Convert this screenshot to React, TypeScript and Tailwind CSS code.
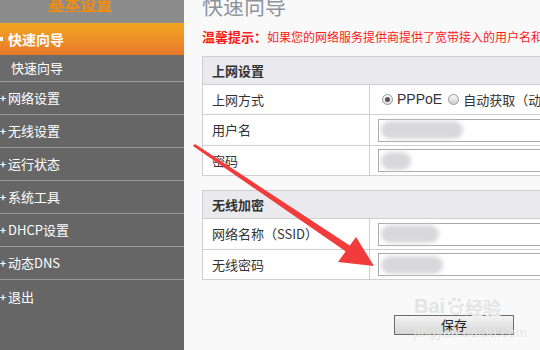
const FONT = '"Noto Sans CJK SC", "Liberation Sans", sans-serif';

const MENU = ['网络设置', '无线设置', '运行状态', '系统工具', 'DHCP设置', '动态DNS', '退出'];

function Blur({ w }: { w: number }) {
  return (
    <div className="flex items-center h-full pl-[2px]">
      <div
        className="h-[18px] rounded-full bg-[#d8d8da] blur-[2px]"
        style={{ width: w }}
      />
    </div>
  );
}

function Row({ label, children, last }: { label: string; children: React.ReactNode; last?: boolean }) {
  return (
    <div className={`grid grid-cols-[167px_1fr] ${last ? '' : 'border-b border-[#cfcfcf]'}`}>
      <div className="border-r border-[#cfcfcf] pl-[9px] flex items-center text-[13px] text-[#333]">{label}</div>
      <div className="flex items-center pl-[8px]">{children}</div>
    </div>
  );
}

function Field({ w }: { w: number }) {
  return (
    <div className="w-[200px] h-[23px] border border-[#a9a9a9] bg-white">
      <Blur w={w} />
    </div>
  );
}

export default function App() {
  return (
    <div className="relative w-[540px] h-[350px] flex overflow-hidden" style={{ fontFamily: FONT }}>
      {/* sidebar */}
      <div className="w-[184px] shrink-0 bg-[#666666] flex flex-col text-white">
        <div className="h-[23px] bg-[#8c8c8c] overflow-hidden pl-[48px]">
          <div className="mt-[-7px] text-[16px] leading-[20px] font-bold text-[#f08c10] underline">基本设置</div>
        </div>
        <div className="h-[32px] bg-gradient-to-b from-[#f2a620] to-[#e8782a] flex items-center">
          <span className="w-[3px] h-[4px] bg-white mr-[5px]" />
          <span className="text-[14px] font-bold">快速向导</span>
        </div>
        <div className="h-[27px] bg-[#6b6b6b] border-b border-[#9a9a9a] flex items-center pl-[11px] text-[13px]">快速向导</div>
        {MENU.map((m, i) => (
          <div
            key={m}
            className={`h-[33px] flex items-center text-[13px] ${i < MENU.length - 1 ? 'border-b border-[#9a9a9a]' : ''}`}
          >
            <span className="text-[10px] font-bold w-[8px] leading-none">+</span>
            {m}
          </div>
        ))}
      </div>

      {/* main */}
      <div className="flex-1 bg-[#f9f9f9] pl-[18px] overflow-hidden">
        <div className="mt-[-9px] text-[21px] leading-[28px] text-[#8e949c] whitespace-nowrap">快速向导</div>
        <div className="mt-[10px] h-[16px] text-[12px] leading-[16px] text-[#ff1a1a] whitespace-nowrap">
          <span className="font-bold text-[13px]">温馨提示：</span>如果您的网络服务提供商提供了宽带接入的用户名和密码
        </div>

        <div className="mt-[11px] w-[420px] border border-[#cfcfcf] bg-white">
          <div className="h-[28px] bg-[#e9e9ee] border-b border-[#cfcfcf] flex items-center pl-[9px] text-[13px] font-bold text-[#333]">上网设置</div>
          <div className="h-[30px] grid">
            <Row label="上网方式">
              <div className="flex items-center text-[13px] text-[#333] whitespace-nowrap">
                <span className="ml-[4px] w-[11px] h-[11px] rounded-full border border-[#999] bg-gradient-to-b from-[#fafafa] to-[#dcdcdc] flex items-center justify-center mr-[4px]">
                  <span className="w-[5px] h-[5px] rounded-full bg-[#555]" />
                </span>
                <span className="text-[14px]" style={{ fontFamily: '"Liberation Sans", sans-serif' }}>PPPoE</span>
                <span className="w-[11px] h-[11px] rounded-full border border-[#999] bg-gradient-to-b from-[#fafafa] to-[#d0d0d0] ml-[6px] mr-[4px]" />
                自动获取（动态IP）
              </div>
            </Row>
          </div>
          <div className="h-[31px] grid">
            <Row label="用户名"><Field w={82} /></Row>
          </div>
          <div className="h-[29px] grid">
            <Row label="密码" last><Field w={30} /></Row>
          </div>
        </div>

        <div className="mt-[14px] w-[420px] border border-[#cfcfcf] bg-white">
          <div className="h-[28px] bg-[#e9e9ee] border-b border-[#cfcfcf] flex items-center pl-[9px] text-[13px] font-bold text-[#333]">无线加密</div>
          <div className="h-[31px] grid">
            <Row label="网络名称（SSID）"><Field w={58} /></Row>
          </div>
          <div className="h-[29px] grid">
            <Row label="无线密码" last><Field w={62} /></Row>
          </div>
        </div>

        <div className="mt-[35px] ml-[192px] w-[120px] h-[20px] border border-[#6b6b6b] bg-gradient-to-b from-[#f4f4f4] to-[#d6d6d6] flex items-center justify-center text-[13px] text-[#222]">
          保存
        </div>
      </div>

      {/* watermark */}
      <div className="absolute left-[414px] top-[296px] text-[#e4e4e4] pointer-events-none" style={{ fontFamily: '"Liberation Sans", sans-serif' }}>
        <div className="flex items-end text-[20px] font-bold leading-none">
          Bai
          <svg width="18" height="20" viewBox="0 0 18 20" className="mx-[1px]">
            <circle cx="4" cy="7" r="2" fill="#e4e4e4" />
            <circle cx="8" cy="3" r="2" fill="#e4e4e4" />
            <circle cx="13" cy="4" r="2" fill="#e4e4e4" />
            <circle cx="16" cy="9" r="1.8" fill="#e4e4e4" />
            <ellipse cx="10" cy="14" rx="5" ry="4" fill="none" stroke="#e4e4e4" strokeWidth="2" />
          </svg>
          <span className="text-[18px]" style={{ fontFamily: FONT }}>经验</span>
        </div>
        <div className="mt-[10px] text-[13px] leading-none tracking-[0.5px]">jingyan.baidu.com</div>
      </div>

      {/* red arrow */}
      <svg className="absolute left-0 top-0 pointer-events-none" width="540" height="350">
        <polygon points="193,146 195,144 352,247 348,253" fill="#f23b3b" />
        <polygon points="374,266 338,262 356,237" fill="#f23b3b" />
      </svg>
    </div>
  );
}
